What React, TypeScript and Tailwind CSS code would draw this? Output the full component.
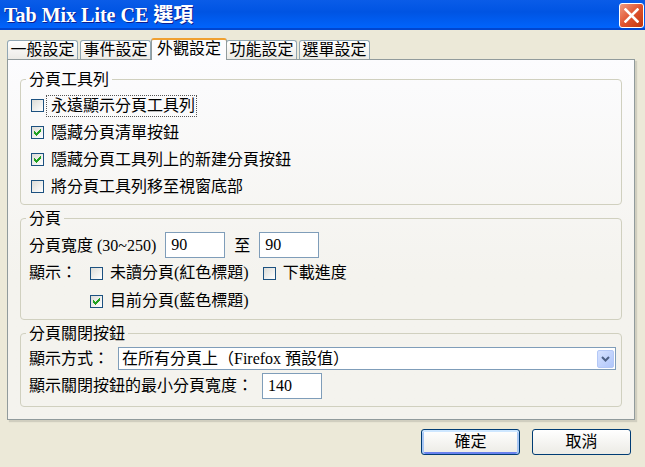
import { useState } from "react";
import type { ReactNode } from "react";
import clsx from "clsx";

const TABS = ["一般設定", "事件設定", "外觀設定", "功能設定", "選單設定"];

function Group({ title, className, children }: { title: string; className?: string; children: ReactNode }) {
  return (
    <fieldset className="min-w-0 rounded-sm border border-[#d0d0bf] px-[5px]">
      <legend className="h-[18px] px-[3px] leading-[20px]">{title}</legend>
      <div className={clsx("pl-[3px]", className)}>{children}</div>
    </fieldset>
  );
}

interface CheckProps {
  label: string;
  defaultChecked?: boolean;
  focused?: boolean;
}

function Check({ label, defaultChecked, focused }: CheckProps) {
  return (
    <label className="flex items-center gap-[2px]">
      <span className="grid size-[13px] shrink-0">
        <input
          type="checkbox"
          defaultChecked={defaultChecked}
          className="peer col-start-1 row-start-1 size-[13px] appearance-none border border-[#1c5180] bg-linear-to-br from-[#dcdcd7] to-white outline-none"
        />
        <svg
          viewBox="0 0 13 13"
          shapeRendering="crispEdges"
          className="pointer-events-none invisible col-start-1 row-start-1 size-[13px] fill-[#21a121] peer-checked:visible"
        >
          <path d="M3 5h1v1h1v1h1v-1h1v-1h1v-1h1v-1h1v3h-1v1h-1v1h-1v1h-1v1h-1v-1h-1v-1h-1z" />
        </svg>
      </span>
      <span
        className={clsx("border border-dotted pr-px pl-1 leading-[20px]", focused ? "border-[#555]" : "border-transparent")}
      >
        {label}
      </span>
    </label>
  );
}

function NumberBox({ label, value }: { label: string; value: string }) {
  return (
    <input
      type="text"
      aria-label={label}
      defaultValue={value}
      className="h-[26px] w-[60px] border border-[#7f9db9] bg-white px-[5px] outline-none"
    />
  );
}

function TabStrip({ active, onSelect }: { active: number; onSelect: (index: number) => void }) {
  return (
    <div role="tablist" className="flex h-[21px] items-end">
      {TABS.map((name, i) => (
        <button
          key={name}
          type="button"
          role="tab"
          aria-selected={i === active}
          onClick={() => onSelect(i)}
          className={clsx(
            "rounded-t-[3px] border border-b-0 leading-[18px]",
            i === active
              ? "z-10 -mr-px -mb-px -ml-[2px] h-[22px] w-[76px] border-[#919b9c] border-t-2 border-t-[#f0a030] bg-[#fcfcfe] pb-[2px]"
              : "mr-[2px] h-[19px] w-[71px] border-[#91a7b4] bg-linear-to-b from-white to-[#ecebe6]",
          )}
        >
          {name}
        </button>
      ))}
    </div>
  );
}

function DialogButton({ children, primary }: { children: ReactNode; primary?: boolean }) {
  return (
    <button
      type="button"
      className={clsx(
        "h-[26px] w-[99px] rounded-[3px] border border-[#003c74] bg-linear-to-b from-white to-[#ecebe5]",
        primary && "shadow-[inset_0_2px_0_#cee7ff,inset_2px_0_0_#a9c8f5,inset_-2px_0_0_#a9c8f5,inset_0_-2px_0_#6982ee]",
      )}
    >
      {children}
    </button>
  );
}

export default function App() {
  const [tab, setTab] = useState(2);

  return (
    <div className="min-h-screen bg-[#ece9d8] font-['Liberation_Serif','Noto_Sans_CJK_TC',serif] text-[16px] leading-[20px] text-black">
      <header className="flex h-[30px] items-center justify-between bg-linear-to-b from-[#0a5ce8] via-[#0054e3] via-40% to-[#0066ff] pr-px pl-1 shadow-[inset_0_-2px_0_#0046d0]">
        <h1 className="text-[20px] leading-[28px] font-bold text-white [text-shadow:1px_1px_0_#0f1f90]">
          Tab Mix Lite CE 選項
        </h1>
        <button
          type="button"
          aria-label="關閉"
          className="grid size-[25px] place-items-center rounded-[3px] border border-white bg-linear-to-br from-[#f09a80] via-[#e0532f] to-[#c03608]"
        >
          <svg viewBox="0 0 15 15" className="size-[15px] stroke-white stroke-[2.6]">
            <path d="M1.5 1.5l12 12M13.5 1.5l-12 12" strokeLinecap="square" />
          </svg>
        </button>
      </header>

      <main className="pt-2 pr-[10px] pl-[7px]">
        <TabStrip active={tab} onSelect={setTab} />
        <section
          role="tabpanel"
          className="flex flex-col gap-1 border border-[#919b9c] bg-linear-to-b from-[#fcfcfe] to-[#f4f3ee] to-60% px-3 pt-[10px] pb-3 shadow-[2px_2px_1px_#d0cebf]"
        >
          <Group title="分頁工具列" className="py-1">
            {[
              { label: "永遠顯示分頁工具列", focused: true },
              { label: "隱藏分頁清單按鈕", defaultChecked: true },
              { label: "隱藏分頁工具列上的新建分頁按鈕", defaultChecked: true },
              { label: "將分頁工具列移至視窗底部" },
            ].map((item) => (
              <div key={item.label} className="flex h-[27px] items-center pl-[2px]">
                <Check {...item} />
              </div>
            ))}
          </Group>

          <Group title="分頁" className="pt-[5px] pb-1">
            <div className="flex h-[27px] items-start gap-[9px]">
              <span className="leading-[27px]">分頁寬度 (30~250)</span>
              <NumberBox label="最小分頁寬度" value="90" />
              <span className="leading-[27px]">至</span>
              <NumberBox label="最大分頁寬度" value="90" />
            </div>
            <div className="grid grid-cols-[61px_1fr]">
              <span className="leading-[28px]">顯示：</span>
              <div>
                <div className="flex h-[28px] items-center gap-3">
                  <Check label="未讀分頁(紅色標題)" />
                  <Check label="下載進度" />
                </div>
                <div className="flex h-[28px] items-center">
                  <Check label="目前分頁(藍色標題)" defaultChecked />
                </div>
              </div>
            </div>
          </Group>

          <Group title="分頁關閉按鈕" className="flex flex-col gap-[3px] pt-[5px] pb-[7px]">
            <div className="flex items-center gap-[9px]">
              <label htmlFor="close-mode" className="shrink-0">
                顯示方式：
              </label>
              <div className="grid min-w-0 flex-1">
                <select
                  id="close-mode"
                  className="col-start-1 row-start-1 h-[23px] w-full appearance-none border border-[#7f9db9] bg-white pr-6 pl-[3px] text-black outline-none"
                >
                  <option>在所有分頁上（Firefox 預設值）</option>
                </select>
                <span className="pointer-events-none col-start-1 row-start-1 mr-[2px] grid h-[18px] w-[17px] place-items-center self-center justify-self-end rounded-[2px] border border-[#b4c8f6] bg-linear-to-br from-[#d6e2ff] to-[#b0c6fa]">
                  <svg viewBox="0 0 9 6" className="h-[6px] w-[9px] fill-none stroke-[#4d6185] stroke-2">
                    <path d="M1 1l3.500 3.500l3.500-3.500" />
                  </svg>
                </span>
              </div>
            </div>
            <div className="flex items-center gap-[9px]">
              <label htmlFor="close-min">顯示關閉按鈕的最小分頁寬度：</label>
              <input
                id="close-min"
                type="text"
                defaultValue="140"
                className="h-[26px] w-[60px] border border-[#7f9db9] bg-white px-[5px] outline-none"
              />
            </div>
          </Group>
        </section>
      </main>

      <footer className="flex justify-end gap-3 pt-[9px] pr-[14px]">
        <DialogButton primary>確定</DialogButton>
        <DialogButton>取消</DialogButton>
      </footer>
    </div>
  );
}
